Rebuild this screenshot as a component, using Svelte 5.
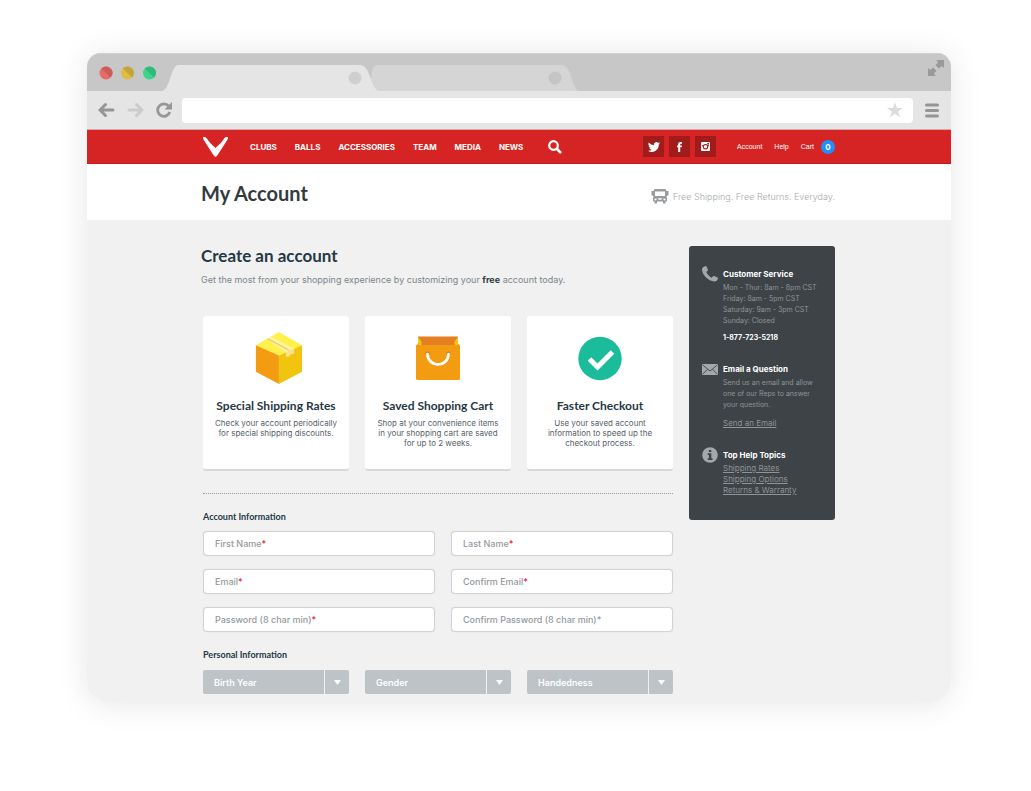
<script>
  const menu = ['Clubs', 'Balls', 'Accessories', 'Team', 'Media', 'News'];
  const fields = [
    { id: 'first', label: 'First Name', type: 'text', required: true },
    { id: 'last', label: 'Last Name', type: 'text', required: true },
    { id: 'email', label: 'Email', type: 'email', required: true },
    { id: 'email2', label: 'Confirm Email', type: 'email', required: true },
    { id: 'pass', label: 'Password (8 char min)', type: 'password', required: true },
    { id: 'pass2', label: 'Confirm Password (8 char min)', type: 'password', required: false }
  ];
  const choices = ['Birth Year', 'Gender', 'Handedness'];
  const values = $state({ first: '', last: '', email: '', email2: '', pass: '', pass2: '' });
</script>

<div class="stage">
  <div class="window">
    <div class="tabstrip">
      <svg class="lights" width="58" height="14" viewBox="0 0 58 14">
        <circle cx="7" cy="7" r="6.5" fill="#e96b69" /><path d="M2.4 2.4A6.5 6.5 0 0 1 11.6 11.6Z" fill="#cb5c5b" />
        <circle cx="28.500" cy="7" r="6.500" fill="#e0bc45" /><path d="M23.900 2.400A6.500 6.500 0 0 1 33.100 11.600Z" fill="#c4a43c" />
        <circle cx="50.500" cy="7" r="6.500" fill="#38d688" /><path d="M45.900 2.400A6.500 6.500 0 0 1 55.100 11.600Z" fill="#31ba77" />
      </svg>
      <svg class="tabs" width="418" height="26" viewBox="0 0 418 26">
        <path d="M205 26C212 14 207 0 216 0H399C411 0 409 26 418 26Z" fill="#d5d5d5" />
        <path d="M0 26C9 24 8 0 17 0H198C209 0 208 24 217 26Z" fill="#e5e5e5" />
        <circle cx="193" cy="13" r="6.500" fill="#cfcfcf" />
        <circle cx="393" cy="13" r="6.500" fill="#c5c5c5" />
      </svg>
      <button class="plain expand" aria-label="Full screen">
        <svg width="16" height="16" viewBox="0 0 16 16" fill="#999">
          <path d="M8 0H16V8L13.800 6L10.800 8.500L7.500 5.200L10.200 2.200ZM0 8L2.200 10L5.200 7.500L8.500 10.800L5.800 13.800L8 16H0Z" />
        </svg>
      </button>
    </div>

    <div class="toolbar">
      <button class="plain" aria-label="Back">
        <svg width="17" height="16" viewBox="0 0 17 16" fill="none" stroke="#969696" stroke-width="3" stroke-linecap="round" stroke-linejoin="round"><path d="M15 8H3M7.500 2.500L2 8L7.500 13.500" /></svg>
      </button>
      <button class="plain" aria-label="Forward">
        <svg width="17" height="16" viewBox="0 0 17 16" fill="none" stroke="#cbcbcb" stroke-width="3" stroke-linecap="round" stroke-linejoin="round"><path d="M2 8H14M9.500 2.500L15 8L9.500 13.500" /></svg>
      </button>
      <button class="plain reload" aria-label="Reload">
        <svg width="17" height="16" viewBox="0 0 17 16" fill="none" stroke="#969696" stroke-width="2.800"><path d="M12.700 4.200A6.200 6.200 0 1 0 13.800 10" /><path d="M16 0V7.500H8.500Z" fill="#969696" stroke="none" /></svg>
      </button>
      <div class="address">
        <input type="text" aria-label="Address" />
        <svg width="16" height="16" viewBox="0 0 16 16" fill="#ddd"><path d="M8 0L10 5.900H16L11.100 9.500L13 15.400L8 11.800L3 15.400L4.900 9.500L0 5.900H6Z" /></svg>
      </div>
      <button class="plain burger" aria-label="Menu">
        <svg width="14" height="15" viewBox="0 0 14 15" stroke="#969696" stroke-width="3" stroke-linecap="round"><path d="M1.500 2H12.500M1.500 7.500H12.500M1.500 13H12.500" /></svg>
      </button>
    </div>

    <header class="nav">
      <div class="inner">
        <a class="logo" href="#home" aria-label="Home">
          <svg width="25" height="20" viewBox="0 0 25 20" fill="#fff"><path d="M0 .3C1.300-.3 2.700.3 3.500 1.500C5.500 4.700 9 8.500 12.500 11.200C16 8.500 19.500 4.700 21.500 1.500C22.300.3 23.700-.3 25 .3C24.600 2 23.800 3.300 22.800 4.700L13.900 18.500C13.200 19.700 11.800 19.700 11.100 18.500L2.200 4.700C1.200 3.300.4 2 0 .3Z" stroke="#fff" stroke-width=".7" stroke-linejoin="round" /></svg>
        </a>
        <nav class="menu">
          {#each menu as item}<a href="#{item}">{item}</a>{/each}
        </nav>
        <button class="plain search" aria-label="Search">
          <svg width="14" height="14" viewBox="0 0 14 14" fill="none" stroke="#fff"><circle cx="5.500" cy="5.500" r="4.300" stroke-width="2.200" /><path d="M8.800 8.800L12.200 12.200" stroke-width="2.700" stroke-linecap="round" /></svg>
        </button>
        <div class="social">
          <a href="#twitter" aria-label="Twitter">
            <svg width="12" height="12" viewBox="0 0 24 24" fill="#fff"><path d="M24 4.600a10 10 0 0 1-2.800.8 5 5 0 0 0 2.200-2.700 10 10 0 0 1-3.100 1.200 4.900 4.900 0 0 0-8.400 4.500A14 14 0 0 1 1.700 3.100a4.900 4.900 0 0 0 1.500 6.600A5 5 0 0 1 1 9.100a4.900 4.900 0 0 0 4 4.900 5 5 0 0 1-2.200.1 4.900 4.900 0 0 0 4.600 3.400A10 10 0 0 1 0 19.500a14 14 0 0 0 21.500-12.400A10 10 0 0 0 24 4.600z" /></svg>
          </a>
          <a href="#facebook" aria-label="Facebook">
            <svg width="5" height="10" viewBox="0 0 5 10" fill="#fff"><path d="M1.200 10V5.200H0V3.500H1.200V2.300C1.200.8 2 0 3.400 0H5V1.700H4C3.400 1.700 3.200 2 3.200 2.500V3.500H5L4.700 5.200H3.200V10Z" /></svg>
          </a>
          <a href="#instagram" aria-label="Instagram">
            <svg width="9" height="9" viewBox="0 0 9 9"><rect width="9" height="9" rx="1" fill="#fff" /><path d="M1 3.700H2M7 3.700H8" stroke="#a11b1b" /><circle cx="4.500" cy="4.700" r="2.200" fill="none" stroke="#a11b1b" stroke-width="1.100" /><rect x="6.300" y="1" width="1.700" height="1.500" fill="#a11b1b" /></svg>
          </a>
        </div>
        <div class="links">
          <a href="#account">Account</a><a href="#help">Help</a><a href="#cart">Cart</a>
        </div>
        <span class="badge">0</span>
      </div>
    </header>

    <div class="titlebar">
      <div class="inner">
        <h1>My Account</h1>
        <p>
          <svg width="18" height="15" viewBox="0 0 18 15" fill="#999da0"><path fill-rule="evenodd" d="M3.500 0H14.500L15.500 2H17.500V6.500H16L15.500 9H16V12.500H14.500V14.500H12V12.500H6V14.500H3.500V12.500H2V9H2.500L2 6.500H.5V2H2.500ZM4 2.500V7H14V2.500ZM3.500 9.700V11.300H5L6 9.700ZM12 9.700L13 11.300H14.500V9.700ZM7 9.300L7.700 10.700H10.300L11 9.300Z" /></svg>
          Free Shipping. Free Returns. Everyday.
        </p>
      </div>
    </div>

    <div class="body">
      <main>
        <h2>Create an account</h2>
        <p class="lead">Get the most from your shopping experience by customizing your <b>free</b> account today.</p>

        <div class="cards">
          <article>
            <svg width="54" height="54" viewBox="-6 0 54 54">
              <path d="M24 0L47.500 13.500L24 24L.5 13.500Z" fill="#fff04a" />
              <path d="M.5 13.500L24 24V53L.5 40.500Z" fill="#f39c12" />
              <path d="M47.500 13.500L24 24V53L47.500 40.500Z" fill="#f1c40f" />
              <path d="M11.500 7L16 4.500L39.500 17L31 21Z" fill="#fff59d" />
              <path d="M12.500 6.700L34 18.500" stroke="#f2c879" stroke-width="1.500" />
              <path d="M31 20.700L39.500 17V22L35 23.500V25L31 25.500Z" fill="#f9e08a" />
            </svg>
            <h3>Special Shipping Rates</h3>
            <p>Check your account periodically<br />for special shipping discounts.</p>
          </article>
          <article>
            <svg width="44" height="44" viewBox="0 0 44 44">
              <path d="M2 0H42V10H2Z" fill="#e67e22" />
              <path d="M2 0L5.500 5V9H2ZM42 0V9H38.500V5Z" fill="#f1c40f" />
              <path d="M0 9L2 7V8.500H42V7L44 9V42A1.500 1.500 0 0 1 42.500 43.500H1.500A1.500 1.500 0 0 1 0 42Z" fill="#f39c12" />
              <circle cx="11.500" cy="17" r="2" fill="#d17a12" /><circle cx="32.500" cy="17" r="2" fill="#d17a12" />
              <path d="M11.500 17.500C12 31.500 32 31.500 32.500 17.500" fill="none" stroke="#fff" stroke-width="2.700" stroke-linecap="round" />
            </svg>
            <h3>Saved Shopping Cart</h3>
            <p>Shop at your convenience items<br />in your shopping cart are saved<br />for up to 2 weeks.</p>
          </article>
          <article>
            <svg width="44" height="44" viewBox="0 0 44 44">
              <circle cx="22" cy="22" r="21.700" fill="#1abc9c" />
              <path d="M11.500 22.500L19.500 30.500L34.500 15.500" fill="none" stroke="#fff" stroke-width="5" />
            </svg>
            <h3>Faster Checkout</h3>
            <p>Use your saved account<br />information to speed up the<br />checkout process.</p>
          </article>
        </div>

        <form>
          <h4>Account Information</h4>
          <div class="fields">
            {#each fields as f}
              <div class="field">
                <input id={f.id} type={f.type} bind:value={values[f.id]} />
                <label for={f.id} class:filled={values[f.id]}>{f.label}<span class:req={f.required}>*</span></label>
              </div>
            {/each}
          </div>
          <h4>Personal Information</h4>
          <div class="selects">
            {#each choices as c}
              <div class="select">
                <select aria-label={c}><option>{c}</option></select>
                <span class="arrow"><svg width="7" height="5" viewBox="0 0 7 5"><path d="M0 0H7L3.500 5Z" fill="#fff" /></svg></span>
              </div>
            {/each}
          </div>
        </form>
      </main>

      <aside>
        <section>
          <svg width="16" height="16" viewBox="0 0 16 16" fill="#a4a8ac"><path d="M1.500 1L3.500 0C4 0 4.300.2 4.500.6L5.900 3.500C6.100 4 6 4.400 5.600 4.700L4.300 5.900C5.400 8.200 7.300 10.300 9.700 11.700L11 10.300C11.400 9.900 11.800 9.900 12.200 10.100L15.400 11.600C16 11.900 16.100 12.300 15.900 12.800C15.300 14.700 14 15.700 12.500 15.600C6 15 0 8.500 0 3.500C0 2.500.6 1.500 1.500 1Z" /></svg>
          <div>
            <h5>Customer Service</h5>
            <p>Mon - Thur: 8am - 8pm CST<br />Friday: 8am - 5pm CST<br />Saturday: 9am - 3pm CST<br />Sunday: Closed</p>
            <strong>1-877-723-5218</strong>
          </div>
        </section>
        <section>
          <svg class="mail" width="16" height="11" viewBox="0 0 16 11"><rect width="16" height="11" fill="#a4a8ac" /><path d="M.5 .8L8 7L15.500 .8M.5 10.300L5.500 5.300M15.500 10.300L10.500 5.300" fill="none" stroke="#3d4347" stroke-width=".9" /></svg>
          <div>
            <h5>Email a Question</h5>
            <p>Send us an email and allow<br />one of our Reps to answer<br />your question.</p>
            <a class="apart" href="#email">Send an Email</a>
          </div>
        </section>
        <section>
          <svg width="16" height="16" viewBox="0 0 16 16"><circle cx="8" cy="8" r="7.800" fill="#a4a8ac" /><path d="M6.900 2.900H9.300V5H6.900ZM5.700 6.200H9.300V11.300H10.500V13H5.700V11.300H6.900V7.900H5.700Z" fill="#3d4347" /></svg>
          <div>
            <h5>Top Help Topics</h5>
            <a href="#rates">Shipping Rates</a>
            <a href="#options">Shipping Options</a>
            <a href="#returns">Returns &amp; Warranty</a>
          </div>
        </section>
      </aside>
    </div>
  </div>
</div>

<style>
  :global(body) { margin: 0; background: #fff; }
  .stage { padding: 53px 80px 80px 87px; font-family: Inter, sans-serif; font-size: 8px; color: #2f3b44; }
  .window { border-radius: 14px 14px 22px 22px; overflow: hidden; background: #f1f1f1; box-shadow: 0 2px 32px rgba(0, 0, 0, 0.1); }
  h1, h2, h3, h4, h5, p { margin: 0; }
  a { color: inherit; text-decoration: none; }
  svg { display: block; flex: none; }
  .plain { border: 0; padding: 0; background: none; cursor: pointer; }

  .tabstrip { display: flex; align-items: flex-end; height: 38px; padding: 0 7px 0 12px; background: #c7c7c7; border-top: 1px solid #d0d0d0; box-sizing: border-box; }
  .lights { margin-bottom: 11px; }
  .tabs { margin-left: 5px; }
  .expand { margin: 0 0 15px auto; }
  .toolbar { display: flex; align-items: center; height: 39px; padding: 0 12px 0 11px; background: #e5e5e5; border-bottom: 1px solid #d9a9a9; box-sizing: border-box; }
  .toolbar .plain + .plain { margin-left: 12px; }
  .toolbar .reload { margin-right: 9px; }
  .address { flex: 1; display: flex; align-items: center; height: 25px; margin-right: 12px; padding-right: 10px; border-radius: 4px; background: #fff; }
  .address input { flex: 1; border: 0; outline: 0; background: none; }

  .inner { display: flex; align-items: center; max-width: 634px; margin: 0 auto; height: 100%; }
  .nav, .titlebar { padding-right: 2px; }
  .nav { height: 34px; background: #d62424; color: #fff; border-bottom: 1px solid #c41c1c; box-sizing: border-box; }
  .logo { margin-left: 2px; }
  .menu { display: flex; gap: 18px; margin-left: 22px; font-weight: 700; text-transform: uppercase; }
  .search { margin-left: 25px; }
  .social { display: flex; gap: 5px; margin-left: auto; }
  .social a { display: flex; align-items: center; justify-content: center; width: 21px; height: 21px; background: #a11b1b; }
  .links { display: flex; gap: 12px; margin-left: 21px; font: 7px "Liberation Sans", sans-serif; }
  .badge { width: 14px; height: 14px; margin-left: 7px; border-radius: 50%; background: #1e8ffb; font-weight: 700; line-height: 14px; text-align: center; }

  .titlebar { height: 56px; background: #fff; }
  .titlebar .inner { justify-content: space-between; }
  h1, h2, h3, h4 { font-family: Lato, sans-serif; font-weight: 700; }
  h1 { padding-top: 2px; font-size: 20px; line-height: 24px; color: #343b3f; }
  .titlebar p { display: flex; align-items: center; gap: 4px; padding-top: 9px; font-size: 9px; line-height: 16px; color: #a5a8aa; font-weight: 300; }

  .body { display: grid; grid-template-columns: minmax(0, 472px) 146px; gap: 16px; justify-content: center; align-items: start; padding: 26px 2px 8px 0; }
  h2 { font-size: 17px; line-height: 20px; color: #263845; }
  .lead { margin: 6px 0 28px; font-size: 9px; line-height: 16px; color: #7b858a; }
  .lead b { color: #2f3b44; }
  .cards { display: grid; grid-template-columns: repeat(3, 1fr); gap: 16px; margin-left: 2px; }
  article { display: flex; flex-direction: column; align-items: center; padding: 16px 4px 21px; border-radius: 3px; border-bottom: 2px solid #d8d8d8; background: #fff; text-align: center; }
  article svg { height: 53px; }
  h3 { margin-top: 13px; font-size: 12px; line-height: 16px; color: #263845; }
  article p { margin-top: 4px; line-height: 10px; color: #56626a; }

  form { margin: 22px 0 0 2px; padding-top: 15px; border-top: 1px dotted #9b9b9b; }
  h4 { font-size: 9px; line-height: 16px; color: #263845; }
  .fields { display: grid; grid-template-columns: 232fr 222fr; gap: 13px 16px; margin: 6px 0 15px; }
  .field { display: grid; height: 25px; }
  .field input { grid-area: 1 / 1; min-width: 0; padding: 0 11px; border: 1px solid #d3d3d3; border-radius: 4px; background: #fff; font: 500 9px Inter, sans-serif; box-shadow: 0 0 1px #ccc; outline: 0; }
  .field label { grid-area: 1 / 1; align-self: center; padding: 0 12px; color: #94999d; font-weight: 500; font-size: 9px; line-height: 16px; pointer-events: none; }
  .field .filled { visibility: hidden; }
  .req { color: #f0142f; }
  .selects { display: grid; grid-template-columns: repeat(3, 1fr); gap: 16px; margin-top: 7px; }
  .select { display: grid; grid-template-columns: 1fr 25px; height: 24px; border-radius: 2px; background: #bdc3c7; overflow: hidden; }
  .select select { grid-area: 1 / 1 / 2 / 3; appearance: none; padding: 0 11px; border: 0; background: none; color: #fff; font: 600 9px Inter, sans-serif; outline: 0; }
  .arrow { grid-area: 1 / 2; display: flex; align-items: center; justify-content: center; border-left: 1px solid #f1f1f1; pointer-events: none; }

  aside { padding: 20px 10px 24px 13px; border-radius: 3px; background: #3d4347; color: #8f9497; line-height: 11px; font-size: 8px; }
  section { display: flex; gap: 5px; }
  section + section { margin-top: 18px; }
  .mail { margin-top: 3px; }
  h5 { font-size: 8px; line-height: 16px; font-weight: 700; color: #fff; }
  aside p { font-size: 7px; }
  aside strong { display: block; margin-top: 6px; color: #fff; font-size: 7px; }
  aside a { display: block; text-decoration: underline; }
  aside .apart { margin-top: 8px; }
</style>
